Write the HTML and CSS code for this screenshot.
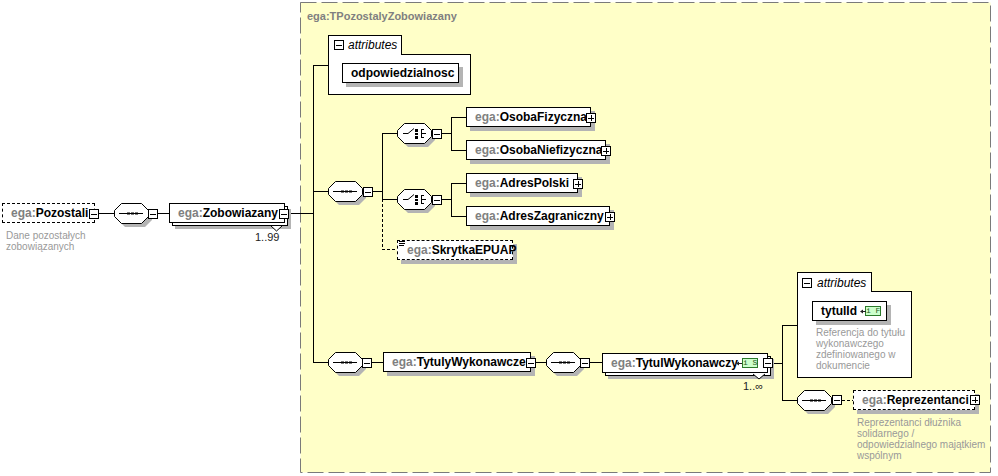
FILE: index.html
```html
<!DOCTYPE html>
<html lang="pl">
<head>
<meta charset="utf-8">
<title>ega:Pozostali</title>
<link rel="stylesheet" href="styles.css">
</head>
<body>
<main class="canvas">
  <svg class="layer" width="998" height="476" viewBox="0 0 998 476">
    <defs>
      <g id="seq">
        <polygon class="sh" points="11,4 31,4 38,11 38,17 31,24 11,24 4,17 4,11"/>
        <polygon class="oct" points="7.5,.5 27.5,.5 34.5,7.5 34.5,13.5 27.5,20.5 7.5,20.5 .5,13.5 .5,7.5"/>
        <path class="ln" d="M5 10.5H29"/>
        <path class="dots" d="M13 9.5h3v2h-3zM17 9.5h3v2h-3zM21 9.5h3v2h-3z"/>
      </g>
      <g id="cho">
        <polygon class="sh" points="11,4 31,4 38,11 38,17 31,24 11,24 4,17 4,11"/>
        <polygon class="oct" points="7.5,.5 27.5,.5 34.5,7.5 34.5,13.5 27.5,20.5 7.5,20.5 .5,13.5 .5,7.5"/>
        <path class="ln round" d="M6 10.5H11L17 5.5"/>
        <path class="dots" d="M18 6h3v3h-3zM18 10h3v2h-3zM18 13h3v3h-3z"/>
        <path class="ln" d="M24.500 6.500V14.500M24 6.500H27M24 10.500H29M24 14.500H27"/>
      </g>
    </defs>

    <rect class="typebox" x="300.500" y="2.500" width="690" height="470"/>

    <path class="wire" d="M99 213.500H114M158 213.500H169M289 213.500H313M313.500 65V362M313 65.500H328M313 191.500H328M373 191.500H382M382.500 133V199M382 133.500H397M382 199.500H397"/>
    <path class="wire" d="M442 133.500H451M451.500 117V150M451 117.500H466M451 150.500H466M442 199.500H451M451.500 183V216M451 183.500H466M451 216.500H466"/>
    <path class="wire" d="M313 362.500H328M372 362.500H383M535 362.500H547M590 362.500H602M773 363.500H782M782.500 325V400M782 325.500H797M782 400.500H797"/>
    <path class="wire dashed" d="M382.500 199V249.500H397M842 400.500H853"/>

    <path class="panel" d="M328.500 35.500H401.500V54.500H470.500V94.500H328.500Z"/>
    <path class="panel" d="M797.500 272.500H871.500V291.500H911.500V377.500H797.500Z"/>

    <use href="#seq" x="114" y="203"/>
    <use href="#seq" x="328" y="181"/>
    <use href="#cho" x="397" y="123"/>
    <use href="#cho" x="397" y="189"/>
    <use href="#seq" x="328" y="352"/>
    <use href="#seq" x="546" y="352"/>
    <use href="#seq" x="797" y="390"/>
  </svg>

  <p class="type-name">ega:TPozostalyZobowiazany</p>

  <div class="node opt n-pozostali"><span class="ns">ega:</span>Pozostali</div>
  <div class="node multi n-zobowiazany"><span class="ns">ega:</span>Zobowiazany</div>
  <div class="node n-odpowiedzialnosc">odpowiedzialnosc</div>
  <div class="node n-osobaf"><span class="ns">ega:</span>OsobaFizyczna</div>
  <div class="node n-osoban"><span class="ns">ega:</span>OsobaNiefizyczna</div>
  <div class="node n-adresp"><span class="ns">ega:</span>AdresPolski</div>
  <div class="node n-adresz"><span class="ns">ega:</span>AdresZagraniczny</div>
  <div class="node opt n-skrytka"><span class="ns">ega:</span>SkrytkaEPUAP</div>
  <div class="node n-tytuly"><span class="ns">ega:</span>TytulyWykonawcze</div>
  <div class="node multi n-tytul"><span class="ns">ega:</span>TytulWykonawczy<span class="badge badge-s">i S</span></div>
  <div class="node n-tytulid">tytulId<span class="badge badge-f">i F</span></div>
  <div class="node opt n-repr"><span class="ns">ega:</span>Reprezentanci</div>

  <span class="attr-label al-1">attributes</span>
  <span class="attr-label al-2">attributes</span>

  <span class="occurs oc-1">1..99</span>
  <span class="occurs oc-2">1..∞</span>

  <p class="desc d-pozostali">Dane pozostałych<br>zobowiązanych</p>
  <p class="desc d-tytulid">Referencja do tytułu<br>wykonawczego<br>zdefiniowanego w<br>dokumencie</p>
  <p class="desc d-repr">Reprezentanci dłużnika<br>solidarnego /<br>odpowiedzialnego majątkiem<br>wspólnym</p>

  <svg class="layer" width="998" height="476" viewBox="0 0 998 476">
    <defs>
      <g id="minus"><rect class="exp" x=".5" y=".5" width="9" height="9"/><path class="ln" d="M2 5H8"/></g>
      <g id="plus"><rect class="exp" x=".5" y=".5" width="9" height="9"/><path class="ln" d="M2 5H8M5 2V8"/></g>
    </defs>
    <use href="#minus" x="89" y="209"/>
    <use href="#minus" x="148" y="209"/>
    <use href="#minus" x="279" y="209"/>
    <use href="#minus" x="334" y="40"/>
    <use href="#minus" x="432" y="129"/>
    <use href="#plus" x="586" y="113"/>
    <use href="#plus" x="601" y="146"/>
    <use href="#minus" x="363" y="187"/>
    <use href="#minus" x="432" y="195"/>
    <use href="#plus" x="573" y="179"/>
    <use href="#plus" x="605" y="212"/>
    <use href="#minus" x="362" y="358"/>
    <use href="#minus" x="526" y="358"/>
    <use href="#minus" x="580" y="358"/>
    <use href="#minus" x="763" y="358"/>
    <use href="#minus" x="802" y="278"/>
    <use href="#minus" x="832" y="395"/>
    <use href="#plus" x="970" y="395"/>

    <path class="chev" d="M271 226L276.500 231L282 226"/>
    <path class="chev" d="M753 374L759 379L765 374"/>

    <path class="lines" d="M399 241.500H405M399 243.500H405M399 245.500H404"/>

    <path class="pin" d="M736 363.500L739 361.500V365.500ZM739 363H742V364H739Z"/>
    <path class="pin" d="M860 311.500L863 309.500V313.500ZM863 311H866V312H863Z"/>
  </svg>
</main>
</body>
</html>
```

FILE: styles.css
```css
* { box-sizing: border-box; }

html, body {
  margin: 0;
  padding: 0;
  background: #fff;
}

.canvas {
  position: relative;
  width: 998px;
  height: 476px;
  overflow: hidden;
  font-family: "Liberation Sans", Arial, sans-serif;
}

.layer {
  position: absolute;
  left: 0;
  top: 0;
  display: block;
  pointer-events: none;
}

.typebox {
  fill: #ffffc8;
  stroke: #7a7a7a;
  stroke-dasharray: 16 5;
}
.wire { fill: none; stroke: #000; shape-rendering: crispEdges; }
.wire.dashed { stroke-dasharray: 3 2; }
.panel { fill: #fff; stroke: #000; shape-rendering: crispEdges; }
.sh { fill: #b4b4b4; }
.oct { fill: #fff; stroke: #000; }
.ln { fill: none; stroke: #000; shape-rendering: crispEdges; }
.ln.round { shape-rendering: auto; }
.dots { fill: #000; }
.exp { fill: #fff; stroke: #000; shape-rendering: crispEdges; }
.chev { fill: #fff; stroke: #000; }
.lines { fill: none; stroke: #000; shape-rendering: crispEdges; }
.pin { fill: #222; }

.type-name {
  position: absolute;
  left: 307px;
  top: 10px;
  margin: 0;
  font-size: 11px;
  line-height: 13px;
  font-weight: bold;
  color: #808080;
}

.node {
  position: absolute;
  height: 20px;
  border: 1px solid #000;
  background: #fff;
  font-size: 12px;
  line-height: 18px;
  font-weight: bold;
  color: #000;
  white-space: nowrap;
  padding-left: 8px;
  box-shadow: 4px 4px 0 #b4b4b4;
}
.node.opt { border-style: dashed; }
.node.multi {
  box-shadow: 3px 3px 0 -1px #fff, 3px 3px 0 0 #000, 6px 6px 0 0 #b4b4b4;
}
.ns { color: #808080; }

.n-pozostali { left: 2px; top: 203px; width: 93px; box-shadow: none; }
.n-zobowiazany { left: 169px; top: 203px; width: 116px; }
.n-odpowiedzialnosc { left: 342px; top: 63px; width: 117px; }
.n-osobaf { left: 466px; top: 107px; width: 125px; }
.n-osoban { left: 466px; top: 140px; width: 140px; }
.n-adresp { left: 466px; top: 173px; width: 112px; }
.n-adresz { left: 466px; top: 206px; width: 144px; }
.n-skrytka { left: 397px; top: 240px; width: 116px; padding-left: 9px; }
.n-tytuly { left: 383px; top: 352px; width: 148px; }
.n-tytul { left: 602px; top: 353px; width: 166px; }
.n-tytulid { left: 812px; top: 301px; width: 75px; }
.n-repr { left: 853px; top: 390px; width: 122px; }

.badge {
  position: absolute;
  top: 4px;
  width: 16px;
  height: 10px;
  border: 1px solid #2b7a2b;
  background: #ccffcc;
  color: #1d5c1d;
  font-family: "Liberation Mono", monospace;
  font-size: 8px;
  line-height: 8px;
  font-weight: normal;
  text-align: center;
}
.badge-s { left: 139px; }
.badge-f { left: 52px; }

.attr-label {
  position: absolute;
  font-size: 12px;
  line-height: 14px;
  font-style: italic;
  color: #000;
}
.al-1 { left: 348px; top: 38px; }
.al-2 { left: 817px; top: 276px; }

.occurs {
  position: absolute;
  font-size: 11px;
  line-height: 13px;
  color: #222;
}
.oc-1 { left: 255px; top: 231px; }
.oc-2 { left: 743px; top: 380px; }

.desc {
  position: absolute;
  margin: 0;
  font-size: 10px;
  line-height: 11px;
  color: #999;
  white-space: nowrap;
}
.d-pozostali { left: 6px; top: 230px; }
.d-tytulid { left: 816px; top: 327px; }
.d-repr { left: 857px; top: 417px; }
```
